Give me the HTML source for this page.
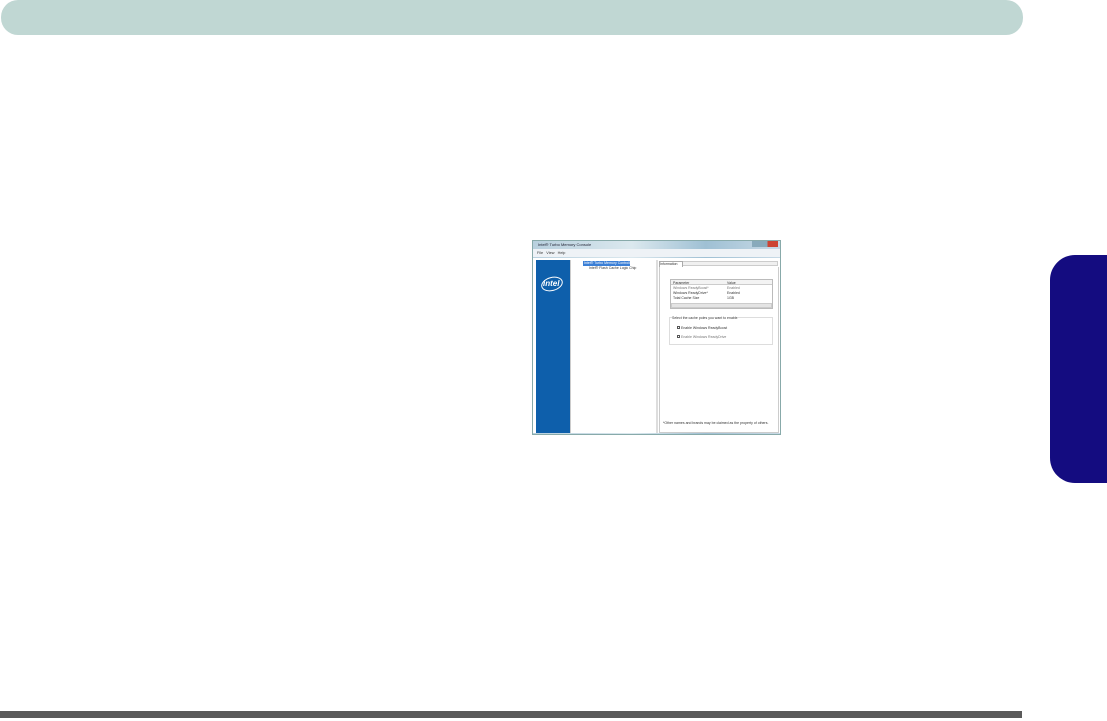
<!DOCTYPE html>
<html><head><meta charset="utf-8"><style>
*{margin:0;padding:0;box-sizing:border-box}
body{width:1107px;height:721px;background:#fff;position:relative;overflow:hidden;font-family:"Liberation Sans",sans-serif}
.a{position:absolute}
.t{font-size:3.5px;color:#333;white-space:nowrap}
</style></head><body>
<div class="a" style="left:1px;top:0;width:1022px;height:35px;background:#c0d7d3;border-radius:17px"></div>
<div class="a" style="left:0;top:711px;width:1022px;height:7px;background:#5a5a5a"></div>
<div class="a" style="left:1050px;top:255px;width:57px;height:228px;background:#140c80;border-radius:25px 0 0 25px"></div>

<!-- window -->
<div class="a" style="left:532px;top:240px;width:249px;height:195px;background:linear-gradient(90deg,#b8d0de,#dbe8ee 40%,#9fc0d4 70%,#c8dae6);border:1px solid #8aa"></div>
<div class="a t" style="left:538px;top:242px;font-size:4px;color:#223">Intel® Turbo Memory Console</div>
<div class="a" style="left:752px;top:241px;width:26px;height:6px;background:linear-gradient(90deg,#8ab 0,#8ab 60%,#c43 60%)"></div>
<div class="a" style="left:533px;top:249px;width:247px;height:8px;background:#eef2f6"></div>
<div class="a t" style="left:537px;top:251px;font-size:3.8px">File&nbsp;&nbsp; View&nbsp;&nbsp; Help</div>
<div class="a" style="left:533px;top:258px;width:247px;height:175px;background:#fff"></div>
<div class="a" style="left:536px;top:260px;width:34px;height:173px;background:#0e5fab"></div>
<div class="a" style="left:541px;top:277px;width:22px;height:14px;border:1.5px solid #fff;border-radius:50%;transform:rotate(-15deg)"></div>
<div class="a" style="left:543px;top:279px;color:#fff;font-size:8px;font-weight:bold;font-style:italic">intel</div>
<div class="a" style="left:570px;top:260px;width:1px;height:173px;background:#ccc"></div>
<div class="a" style="left:583px;top:261px;width:47px;height:5px;background:#3b7fd6"></div>
<div class="a t" style="left:584px;top:261px;color:#fff">Intel® Turbo Memory Controller</div>
<div class="a t" style="left:589px;top:266px">Intel® Flash Cache Logic Chip</div>
<div class="a" style="left:656px;top:260px;width:2px;height:173px;background:#ddd"></div>
<div class="a" style="left:659px;top:261px;width:119px;height:5px;background:#f0f0f0;border:1px solid #ccc"></div>
<div class="a" style="left:659px;top:261px;width:24px;height:6px;background:#fff;border:1px solid #aaa;border-bottom:none"></div>
<div class="a t" style="left:660px;top:262px">Information</div>
<div class="a" style="left:659px;top:267px;width:120px;height:166px;border:1px solid #ccc;border-top:none"></div>
<div class="a" style="left:670px;top:279px;width:103px;height:30px;border:1px solid #bbb;background:#fff"></div>
<div class="a" style="left:671px;top:280px;width:101px;height:5px;background:#f3f3f3;border-bottom:1px solid #ccc"></div>
<div class="a t" style="left:673px;top:281px">Parameter</div><div class="a t" style="left:727px;top:281px">Value</div>
<div class="a t" style="left:673px;top:286px;color:#777">Windows ReadyBoost*</div><div class="a t" style="left:727px;top:286px;color:#777">Enabled</div>
<div class="a t" style="left:673px;top:291px">Windows ReadyDrive*</div><div class="a t" style="left:727px;top:291px">Enabled</div>
<div class="a t" style="left:673px;top:296px">Total Cache Size</div><div class="a t" style="left:727px;top:296px">1GB</div>
<div class="a" style="left:671px;top:303px;width:101px;height:5px;background:#e4e4e4;border:1px solid #ccc"></div>
<div class="a" style="left:669px;top:317px;width:104px;height:28px;border:1px solid #ddd"></div>
<div class="a t" style="left:672px;top:316px;background:#fff">Select the cache poles you want to enable</div>
<div class="a" style="left:677px;top:326px;width:3px;height:3px;border:0.5px solid #555"></div>
<div class="a t" style="left:681px;top:326px">Enable Windows ReadyBoost</div>
<div class="a" style="left:677px;top:335px;width:3px;height:3px;border:0.5px solid #555"></div>
<div class="a t" style="left:681px;top:335px;color:#777">Enable Windows ReadyDrive</div>
<div class="a t" style="left:663px;top:421px">*Other names and brands may be claimed as the property of others.</div>
</body></html>
